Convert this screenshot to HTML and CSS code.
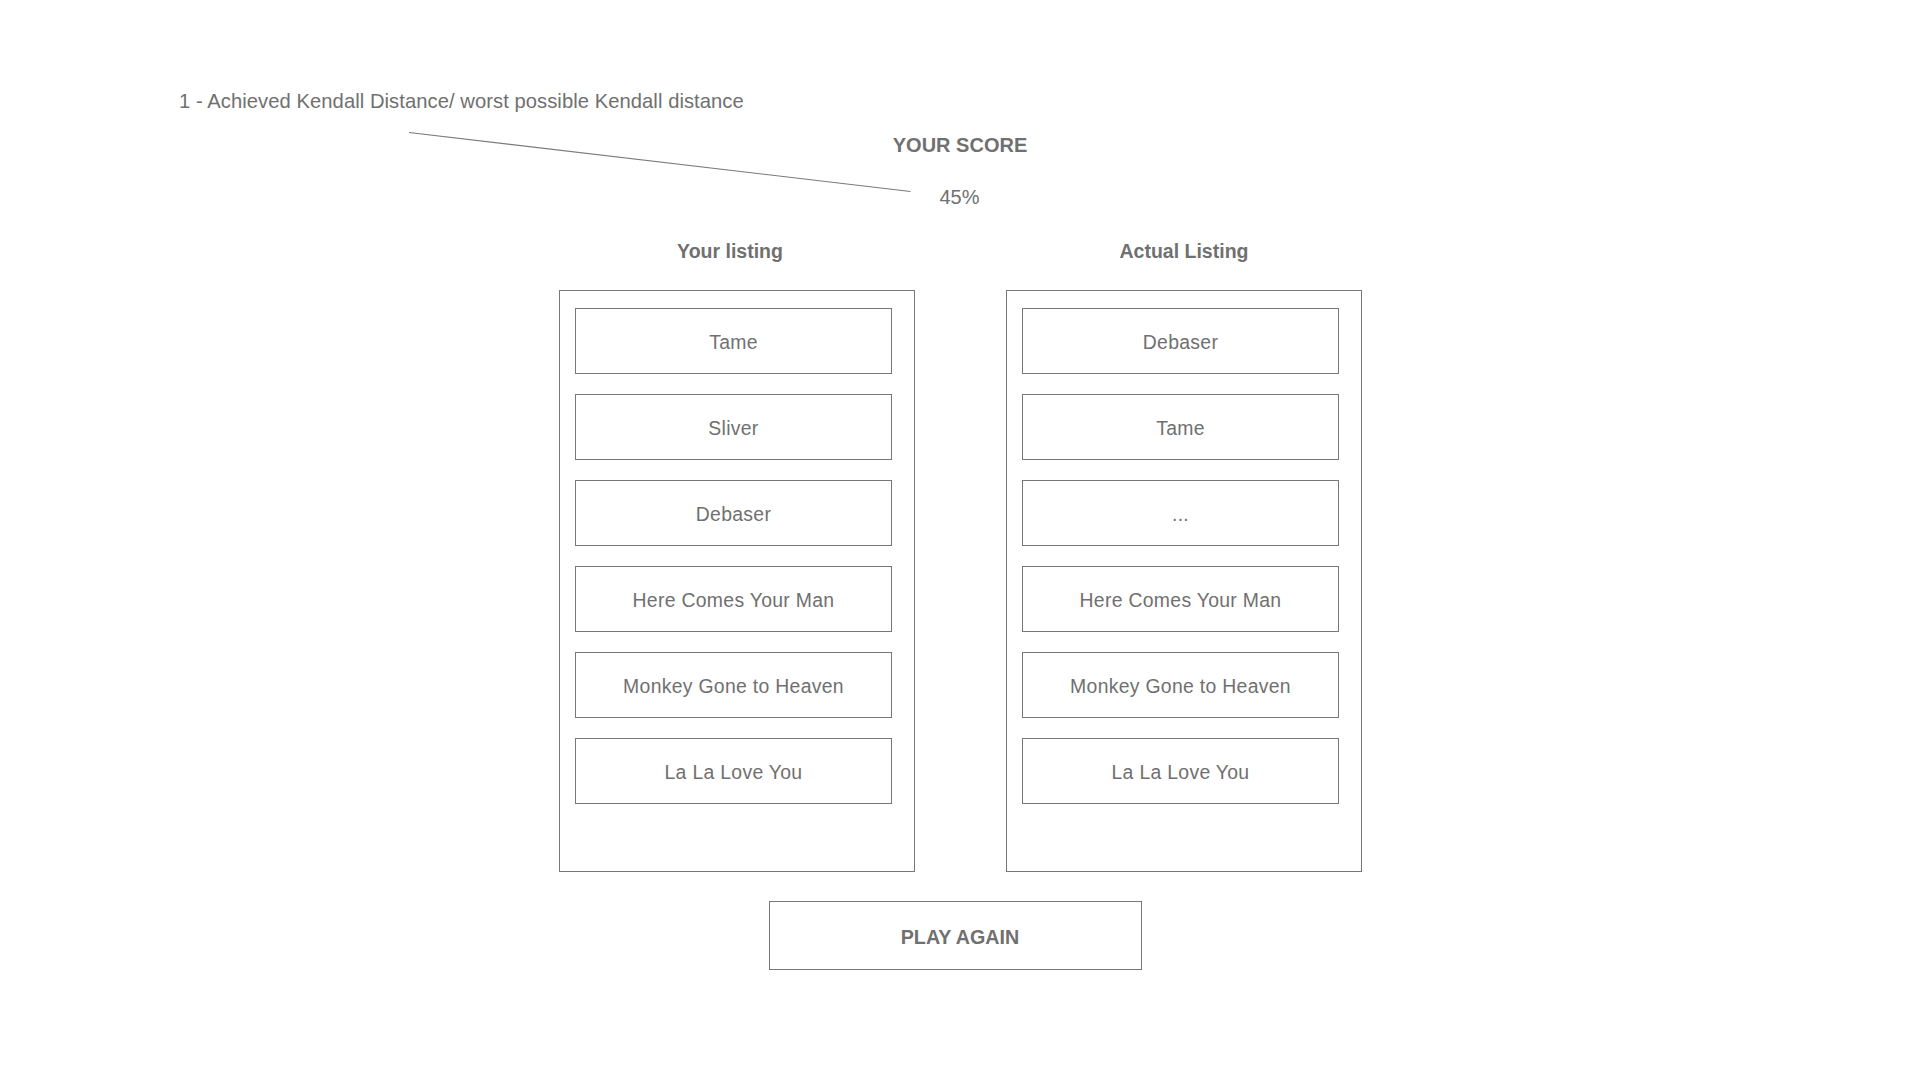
FILE: index.html
```html
<!DOCTYPE html>
<html lang="en">
<head>
<meta charset="utf-8">
<title>Your Score</title>
<link rel="stylesheet" href="styles.css">
</head>
<body>
<div class="page">
  <svg class="annotation-line" width="1920" height="1080" viewBox="0 0 1920 1080" aria-hidden="true">
    <line x1="409" y1="132.5" x2="910.5" y2="191.5" stroke="#7a7a7a" stroke-width="1.1"/>
  </svg>

  <p class="caption">1 - Achieved Kendall Distance/ worst possible Kendall distance</p>

  <h1 class="score-title">YOUR SCORE</h1>
  <div class="score-value">45%</div>

  <div class="columns">
    <section class="column">
      <h2 class="column-title column-title--shifted">Your listing</h2>
      <div class="panel">
        <div class="item">Tame</div>
        <div class="item">Sliver</div>
        <div class="item">Debaser</div>
        <div class="item">Here Comes Your Man</div>
        <div class="item">Monkey Gone to Heaven</div>
        <div class="item">La La Love You</div>
      </div>
    </section>
    <section class="column">
      <h2 class="column-title">Actual Listing</h2>
      <div class="panel">
        <div class="item">Debaser</div>
        <div class="item">Tame</div>
        <div class="item">...</div>
        <div class="item">Here Comes Your Man</div>
        <div class="item">Monkey Gone to Heaven</div>
        <div class="item">La La Love You</div>
      </div>
    </section>
  </div>

  <div class="actions">
    <button class="play-again" type="button">PLAY AGAIN</button>
  </div>
</div>
</body>
</html>
```

FILE: styles.css
```css
* {
  box-sizing: border-box;
}

html, body {
  margin: 0;
  padding: 0;
  background: #ffffff;
}

body {
  font-family: "Liberation Sans", Arial, Helvetica, sans-serif;
  color: #707070;
}

.page {
  position: relative;
  width: 1920px;
  height: 1080px;
  padding-top: 89px;
  overflow: hidden;
}

.annotation-line {
  position: absolute;
  left: 0;
  top: 0;
  pointer-events: none;
}

.caption {
  margin: 0 0 0 179px;
  font-size: 20.2px;
  line-height: 24px;
  font-weight: 400;
  letter-spacing: 0.06px;
}

.score-title {
  margin: 20px 0 0 0;
  text-align: center;
  font-size: 20px;
  line-height: 24px;
  font-weight: 700;
}

.score-value {
  margin-top: 28px;
  text-align: center;
  font-size: 20px;
  line-height: 24px;
  padding-right: 1px;
}

.columns {
  display: flex;
  justify-content: center;
  gap: 91px;
  margin-top: 30px;
  padding-left: 1px;
}

.column {
  display: flex;
  flex-direction: column;
  align-items: center;
  width: 356px;
}

.column-title {
  margin: 0;
  font-size: 19.5px;
  line-height: 24px;
  font-weight: 700;
  text-align: center;
}

.column-title--shifted {
  padding-right: 14px;
}

.panel {
  margin-top: 27px;
  width: 356px;
  height: 582px;
  border: 1px solid #777777;
  padding: 17px 22px 0 15px;
  display: flex;
  flex-direction: column;
  gap: 20px;
}

.item {
  height: 66px;
  border: 1px solid #777777;
  display: flex;
  align-items: center;
  justify-content: center;
  font-size: 19.4px;
  line-height: 24px;
  letter-spacing: 0.3px;
  padding-top: 1px;
}

.actions {
  display: flex;
  justify-content: center;
  margin-top: 29px;
}

.play-again {
  width: 373px;
  height: 69px;
  margin-right: 9px;
  background: #ffffff;
  border: 1px solid #777777;
  border-radius: 0;
  font-family: "Liberation Sans", Arial, Helvetica, sans-serif;
  color: #707070;
  font-size: 19.7px;
  font-weight: 700;
  line-height: 24px;
  padding: 3px 0 0 9px;
}
```
